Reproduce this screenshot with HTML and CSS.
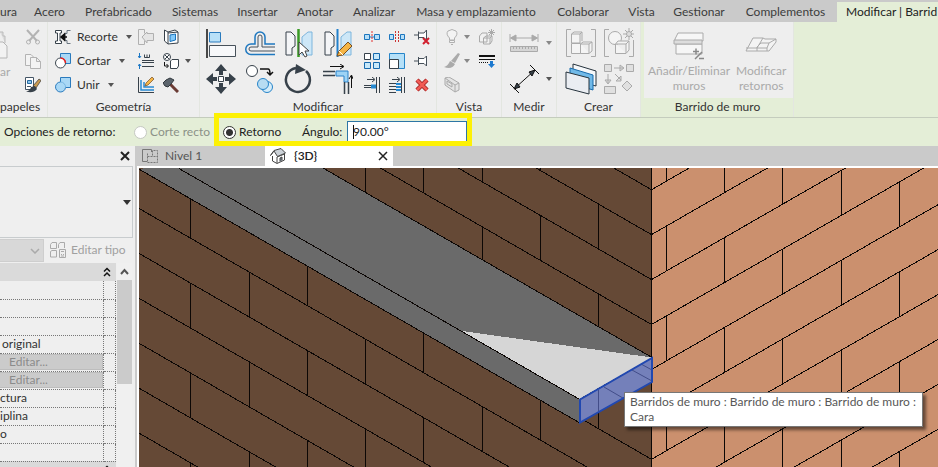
FILE: index.html
```html
<!DOCTYPE html>
<html lang="es">
<head>
<meta charset="utf-8">
<title>Barrido de muro</title>
<meta name="viewport" content="width=device-width, initial-scale=1">
<link rel="stylesheet" href="styles.css">
</head>
<body>
<div class="app">

<nav class="tabs" aria-label="Cinta">
  <a href="#" class="tab tab-first">ura</a>
  <a href="#" class="tab">Acero</a>
  <a href="#" class="tab">Prefabricado</a>
  <a href="#" class="tab">Sistemas</a>
  <a href="#" class="tab">Insertar</a>
  <a href="#" class="tab">Anotar</a>
  <a href="#" class="tab">Analizar</a>
  <a href="#" class="tab">Masa y emplazamiento</a>
  <a href="#" class="tab">Colaborar</a>
  <a href="#" class="tab">Vista</a>
  <a href="#" class="tab">Gestionar</a>
  <a href="#" class="tab">Complementos</a>
  <a href="#" class="tab tab-active">Modificar | Barrid</a>
</nav>

<div class="ribbon">
  <section class="panel panel-clip">
    <div class="tools">
      <button class="big-tool paste" disabled>
        <svg width="8" height="34"><path d="M0 4H3V8H5V15" fill="#ddd" stroke="#bbb"/><path d="M0 14H3L7 18V30H0" fill="#f2f2f2" stroke="#b5b5b5"/></svg>
        <span>ar</span>
      </button>
      <div class="stack">
        <button class="tool" aria-label="Cortar al portapapeles" disabled><svg width="16" height="16" fill="none" stroke="#b3b3b3"><path d="M2 1L12 12M14 1L4 12" stroke-width="2"/><circle cx="3.5" cy="13" r="2"/><circle cx="12.5" cy="13" r="2"/></svg></button>
        <button class="tool" aria-label="Copiar" disabled><svg width="16" height="16" fill="#f3f3f3" stroke="#b3b3b3"><path d="M.5 1.5H6L9 4.5V12.5H.5Z"/><path d="M5.500 4.500H11.500L15.500 8.500V15.500H5.500ZM11.500 4.500V8.500H15.500"/></svg></button>
        <button class="tool" aria-label="Igualar propiedades"><svg width="16" height="16"><path d="M.5.5H8.500V12.500H.5Z" fill="#fff" stroke="#456"/><path d="M2.500 3.500H6.500V6.500H2.500Z" fill="#8cc6ef" stroke="#2469a0"/><path d="M2 9.500H6" stroke="#456"/><path d="M8 9L14 2L16 3.500L11 11Z" fill="#c99a50" stroke="#333" stroke-width=".7"/><path d="M1 14.500Q5 14 6 10L10 9L12 12Q8 17 1 14.500" fill="#37414a"/></svg></button>
      </div>
    </div>
    <h2>papeles</h2>
  </section>

  <section class="panel panel-geometry">
    <div class="tools">
      <div class="stack labelled">
        <button class="tool"><svg width="16" height="16"><path d="M.5 1.500H6.500V4H5V12H6.500V14.500H.5V12H2.500V4H.5Z" fill="#fff" stroke="#37414a"/><path d="M15.500 1.500H12V4.500H10V11.500H12V14.500H15.500" fill="none" stroke="#687580"/><path d="M12 8H7M9.500 5L6 8L9.500 11Z" stroke="#111" stroke-width="1.500"/></svg><span>Recorte</span><i class="caret"></i></button>
        <button class="tool"><svg width="16" height="16"><path d="M5.500.5H15.500V10.500H5.500Z" fill="#a9d8f6" stroke="#2a7abd"/><circle cx="5.500" cy="10" r="5" fill="#fff" stroke="#3d4750"/><path d="M5.500 5A5 5 0 0 1 10.500 10" fill="none" stroke="#e22" stroke-width="1.500"/></svg><span>Cortar</span><i class="caret"></i></button>
        <button class="tool"><svg width="16" height="16"><path d="M5.500.5H15.500V10.500H10.500A5 5 0 1 1 5.500 5Z" fill="#a9d8f6" stroke="#2a7abd"/><path d="M5.500 5A5 5 0 0 1 10.500 10.500" fill="none" stroke="#77b6e2"/></svg><span>Unir</span><i class="caret"></i></button>
      </div>
      <div class="stack">
        <button class="tool" aria-label="Desajustar" disabled><svg width="16" height="16" fill="none" stroke="#b0b0b0"><path d="M6.500 4.500V.5H.5V15.500H6.500V11.500"/><path d="M15.500 4.500V11.500H9V14L4 8L9 3V4.500Z" fill="#e5e5e5"/></svg></button>
        <button class="tool" aria-label="Uniones de viga"><svg width="16" height="16" fill="none" stroke="#37414a"><path d="M4 7.500H16M4 9.500H16M4 13.500H16"/><path d="M6.500 1.500V4.500H11.500V1.500M9 1.500V4"/><path d="M1.500 0V5M0 3L1.500 5L3 3M1.500 16V11M0 13L1.500 11L3 13" stroke="#1976c5"/></svg></button>
        <button class="tool" aria-label="Uniones de muro"><svg width="16" height="16" fill="none"><path d="M.5 0V15.500H16" stroke="#37414a"/><path d="M3 3V13H16M6 5V10H16" stroke="#278bd5" stroke-width="1.500"/><path d="M7 9L8 6L14 0L16 2L10 8Z" fill="#f5b545" stroke="#704c25" stroke-width=".7"/></svg></button>
      </div>
      <div class="stack">
        <button class="tool" aria-label="Dividir cara"><svg width="16" height="16"><path d="M1.500 1L5 3L12 1L15 3V14L5 15L1.500 12Z" fill="#fff" stroke="#37414a"/><path d="M5 3V15M5 4L15 3" stroke="#37414a" fill="none"/><path d="M7 6L12.500 5V11L7 12.500Z" fill="#82c9fa" stroke="#1872bb"/></svg></button>
        <button class="tool" aria-label="Pintar"><svg width="16" height="16" fill="#fff" stroke="#37414a"><circle cx="4" cy="4" r="3.500"/><path d="M2 2L6 6M6 2L2 6"/><path d="M7.500 8L9 6.500H15.500V13L14 15.500H7.500Z"/><path d="M1.500 9V13H5M3.500 11L5.500 13L3.500 15" fill="none" stroke="#111"/></svg><i class="caret"></i></button>
        <button class="tool" aria-label="Derribar"><svg width="16" height="16"><path d="M6 6L15 15" stroke="#6a3b34" stroke-width="3"/><path d="M0 6L3 3L7 1L11 3L8 7L5 10L2 9Z" fill="#5b646c" stroke="#30373d"/></svg></button>
      </div>
    </div>
    <h2>Geometría</h2>
  </section>

  <section class="panel panel-modify">
    <div class="tools">
      <div class="big-grid">
        <button class="tool" aria-label="Alinear"><svg width="30" height="30"><path d="M1 1V30" stroke="#111" stroke-width="1.500"/><path d="M3.500 4.500H14.500V14H3.500Z" fill="#b8e0f8" stroke="#2a7abd"/><path d="M3.500 17.500H29.500V28.500H3.500Z" fill="#f7f8fa" stroke="#47515a"/></svg></button>
        <button class="tool" aria-label="Desfase"><svg width="30" height="30" fill="none"><path d="M30 26.500H6A5 5 0 0 1 6 16H10V9A5 5 0 0 1 20 9V16H30" stroke="#1e78c0" stroke-width="1.500"/><path d="M30 23H6A2 2 0 0 1 6 19H13V9A2 2 0 0 1 17 9V19H30" stroke="#47515a"/></svg></button>
        <button class="tool" aria-label="Simetría: elegir eje"><svg width="30" height="30"><path d="M2 4H7L11 8V18L8 20V27H2Z" fill="#f4f5f7" stroke="#37414a"/><path d="M28 4H24L18 9V27H28Z" fill="#cde7f7" stroke="#7db5dc"/><path d="M14.500 1V29" stroke="#399a24" stroke-width="2.500"/><path d="M15 14V27L18 24L21 29L23 28L21 23H25Z" fill="#fff" stroke="#444"/></svg></button>
        <button class="tool" aria-label="Simetría: dibujar eje"><svg width="30" height="30"><path d="M2 4H7L11 8V18L8 20V27H2Z" fill="#f4f5f7" stroke="#37414a"/><path d="M28 4H24L18 9V27H28Z" fill="#cde7f7" stroke="#7db5dc"/><path d="M14.500 1V29" stroke="#2381cc" stroke-width="2"/><path d="M14 28L16 23L25 14L29 18L20 27Z" fill="#f5b545" stroke="#774f24"/><path d="M16 23L20 27" stroke="#fff"/></svg></button>
        <button class="tool" aria-label="Mover"><svg width="30" height="30" fill="#37414a"><path d="M15 0L21 7H17V11H13V7H9ZM15 30L9 23H13V19H17V23H21ZM0 15L7 9V13H11V17H7V21ZM30 15L23 21V17H19V13H23V9Z"/><path d="M12.500 12.500H17.500V17.500H12.500Z" fill="#fff" stroke="#37414a"/></svg></button>
        <button class="tool" aria-label="Copiar elementos"><svg width="30" height="30"><circle cx="7" cy="7" r="5.500" fill="#fff" stroke="#37414a"/><circle cx="22" cy="23" r="5.500" fill="#d5ecf9" stroke="#2684c9"/><circle cx="18" cy="20" r="5.500" fill="#b7dcf2" stroke="#2684c9"/><path d="M15 5H23Q25 5 25 10M22 8L25 11L28 8" fill="none" stroke="#111" stroke-width="1.500"/></svg></button>
        <button class="tool" aria-label="Girar"><svg width="30" height="30"><path d="M22 7A12 12 0 1 1 12 4" fill="none" stroke="#37414a" stroke-width="2.500"/><path d="M12 0L22 6L11 10Z" fill="#37414a"/></svg></button>
        <button class="tool" aria-label="Recortar esquina"><svg width="30" height="30" fill="none"><path d="M13 7H25V18H21V12H13Z" fill="#9dd3f5" stroke="#2a82c9"/><path d="M0 7.500H12M0 11.500H12M21.500 18V30M25.500 18V30" stroke="#37414a" stroke-width="1.500"/><path d="M7 2.500H20M17 0L21 2.500L17 5M28.500 24V12M26 15L28.500 11L30 15" stroke="#111"/></svg></button>
      </div>
      <div class="small-grid">
        <button class="tool" aria-label="Dividir elemento"><svg width="16" height="16"><path d="M.5 5.500H5.500V10.500H.5ZM10.500 5.500H15.500V10.500H10.500Z" fill="#b8dff7" stroke="#1d76be"/><path d="M5 8H11" stroke="#1d76be"/><path d="M8 2V14" stroke="#e23030" stroke-dasharray="2 1"/></svg></button>
        <button class="tool" aria-label="Dividir con hueco"><svg width="16" height="16"><path d="M.5 5.500H4.500V10.500H.5ZM11.500 5.500H15.500V10.500H11.500Z" fill="#b8dff7" stroke="#1d76be"/><path d="M6.500 2V14M9.500 2V14" stroke="#c33" stroke-dasharray="2 1"/></svg></button>
        <button class="tool" aria-label="Desbloquear"><svg width="16" height="16"><path d="M0 6H4M4.500 2.500V10.500M4.500 4H10L12.500 1V11L10 8.500H4.500" fill="#fff" stroke="#47515a"/><path d="M9 9L15 15M15 9L9 15" stroke="#d11f2d" stroke-width="2"/></svg></button>
        <button class="tool" aria-label="Matriz"><svg width="16" height="16" fill="#c7e8fa" stroke="#1769ad"><path d="M.5.5H6.500V6.500H.5Z" fill="#fff" stroke="#37414a"/><path d="M9.500.5H15.500V6.500H9.500ZM.5 9.500H6.500V15.500H.5ZM9.500 9.500H15.500V15.500H9.500Z"/></svg></button>
        <button class="tool" aria-label="Escala"><svg width="16" height="16"><path d="M.5.5H15.500V15.500H.5Z" fill="#b5e0f8" stroke="#2685c9"/><path d="M.5 6.500H9.500V15.500H.5Z" fill="#fff" stroke="#37414a"/></svg></button>
        <button class="tool" aria-label="Bloquear"><svg width="16" height="16"><path d="M0 8H4M4.500 4V12M4.500 5.500H10L12.500 3V13L10 10.500H4.500" fill="#fff" stroke="#47515a"/></svg></button>
        <button class="tool" aria-label="Recortar un elemento"><svg width="16" height="16" fill="none" stroke="#37414a"><path d="M3 2.500H10M8 0L11 2.500L8 5M0 8.500H7M0 10.500H7M12.500 0V16M15.500 0V16"/><path d="M7 8.500H12M7 10.500H12" stroke="#2588d0" stroke-width="2"/></svg></button>
        <button class="tool" aria-label="Recortar varios elementos"><svg width="16" height="16" fill="none" stroke="#37414a"><path d="M3 2.500H10M8 0L11 2.500L8 5M0 6.500H7M0 9.500H7M0 12.500H7M0 15.500H7M12.500 0V16M15.500 0V16"/><path d="M7 7H12M7 10H12M7 13H12" stroke="#2588d0" stroke-width="2"/></svg></button>
        <button class="tool" aria-label="Suprimir"><svg width="16" height="16"><path d="M3 3L13 13M13 3L3 13" stroke="#a72929" stroke-width="4.500"/><path d="M3 3L13 13M13 3L3 13" stroke="#f25b55" stroke-width="2.500"/></svg></button>
      </div>
    </div>
    <h2>Modificar</h2>
  </section>

  <section class="panel panel-view">
    <div class="tools">
      <div class="stack">
        <button class="tool" aria-label="Ocultar en vista" disabled><svg width="16" height="16" fill="#f3f3f3" stroke="#b0b0b0"><path d="M5.500 11V9Q1.500 5 4 2Q8-1 12 2Q14.500 5 10.500 9V11Z"/><path d="M5.500 11.500H10.500V13.500H5.500ZM7 15.500H9"/></svg><i class="caret"></i></button>
        <button class="tool" aria-label="Modificar gráficos" disabled><svg width="16" height="16" fill="#aaa"><path d="M7 8L14 0L16 1L11 10ZM0 14Q4 13 6 8L11 11Q8 17 0 14"/></svg><i class="caret"></i></button>
        <button class="tool" aria-label="Cuadro de selección" disabled><svg width="16" height="16" fill="#e4e4e4" stroke="#aaa"><path d="M1 1L5 0L15 6V13L11 15L1 8ZM1 1L11 8V15M11 8L15 6M3 4L8 7V10L3 7Z"/></svg></button>
      </div>
      <div class="stack">
        <button class="tool" aria-label="Desplazar elementos" disabled><svg width="16" height="16" fill="#f1f1f1" stroke="#aaa"><path d="M.5 7L3 4H8V13H.5ZM4.500 9L7 7H13L11 9V15H4.500ZM11 9H4.500M13 7V12L11 15"/><path d="M12.500 0V7M9 3.500H16M10 1L15 6M15 1L10 6"/></svg></button>
        <button class="tool" aria-label="Estilo de línea"><svg width="16" height="16"><path d="M0 3H16" stroke="#111" stroke-width="2"/><path d="M0 6.500H16" stroke="#111"/><path d="M0 9.500H10" stroke="#111" stroke-dasharray="1 1"/><path d="M11 8H14V11H16L12.500 15L9 11H11Z" fill="#1c79cf"/></svg></button>
      </div>
    </div>
    <h2>Vista</h2>
  </section>

  <section class="panel panel-measure">
    <div class="tools">
      <div class="big-stack">
        <button class="tool" aria-label="Medir" disabled><svg width="30" height="30" fill="none" stroke="#aaa"><path d="M3 10H27M1 6V14M29 6V14"/><path d="M1.500 10L7 7V13ZM28.500 10L23 7V13Z" fill="#aaa"/><path d="M1.500 18.500H28.500V23.500H1.500Z" fill="#d5d5d5"/><path d="M4.500 19V21M7.500 19V21M10.500 19V21M13.500 19V21M16.500 19V21M19.500 19V21M22.500 19V21M25.500 19V21"/></svg><i class="caret"></i></button>
        <button class="tool" aria-label="Cota alineada"><svg width="30" height="30" stroke="#111"><path d="M5 25L26 6M1 20L10 29M21 1L30 10"/><path d="M5 25L8 19L11 23ZM26 6L20 8L23 12Z" fill="#37414a"/></svg><i class="caret"></i></button>
      </div>
    </div>
    <h2>Medir</h2>
  </section>

  <section class="panel panel-create">
    <div class="tools">
      <div class="big-grid">
        <button class="tool" aria-label="Crear grupo" disabled><svg width="30" height="30" fill="#f4f4f4" stroke="#aaa"><path d="M5 1.500H.5V28.500H5M25 1.500H29.500V28.500H25" fill="none"/><path d="M5.500 6L8 4H16L14 6V15H5.500ZM14 6H5.500M16 4V13M5.500 15.500H14.500V25.500H5.500ZM14.500 16L17 14H26V23L23 25.500H14.500ZM23 25V16H15M23 16L26 14"/></svg></button>
        <button class="tool" aria-label="Crear similar" disabled><svg width="30" height="30" fill="#f4f4f4" stroke="#aaa"><path d="M5 1.500H.5V28.500H5M25 28.500H29.500V12" fill="none"/><circle cx="11" cy="10" r="6.500"/><path d="M11.500 16L14 13H25V22L22 25.500H11.500ZM22 25V16H12M22 16L25 13"/><path d="M25 0V12M19 6H30M21 2L29 10M29 2L21 10"/><circle cx="25" cy="6" r="2.500" fill="#ddd"/></svg></button>
        <button class="tool" aria-label="Crear ensamblaje"><svg width="32" height="32" stroke="#26333d"><path d="M8 1L31 8V23L8 17Z" fill="#f6f8fa"/><path d="M5 5L28 12V27L5 20Z" fill="#70b9e8" stroke="#176aac"/><path d="M1 9L24 15V31L1 25Z" fill="#eaedf2"/></svg></button>
        <button class="tool" aria-label="Crear piezas" disabled><svg width="30" height="30" fill="#e0e0e0" stroke="#aaa"><path d="M.5.5H7.500V7.500H.5ZM22.500.5H29.500V7.500H22.500ZM.5 22.500H11.500V29.500H.5ZM23 17L28 22L23 27L18 22Z"/><path d="M10 4H19M16 1L20 4L16 7ZM4 10V19M1 16L4 20L7 16ZM11 10L17 16M17 12V17H12Z"/></svg></button>
      </div>
    </div>
    <h2>Crear</h2>
  </section>

  <section class="panel panel-sweep">
    <div class="tools">
      <button class="big-tool" disabled>
        <svg width="32" height="32" fill="#f6f6f6" stroke="#aaa"><path d="M2 10L5 4H30V12H2ZM3 15H29V25H3Z"/><path d="M1 11H29V15H1Z" fill="#ddd"/><path d="M20 22.500H26M23 19.500V25.500M22 30L29 23M26 29.500H31" stroke="#888" stroke-width="1.500"/></svg>
        <span>Añadir/Eliminar<br>muros</span>
      </button>
      <button class="big-tool" disabled>
        <svg width="32" height="32" fill="#f3f3f3" stroke="#aaa"><path d="M1 22L8 9H18L20 10H31V13L24 22Z"/><path d="M1 19H12L18 9M12 18V22M12 18L16 14H24L31 10M24 14L22 19H12M22 19V22" fill="none"/></svg>
        <span>Modificar<br>retornos</span>
      </button>
    </div>
    <h2>Barrido de muro</h2>
  </section>
</div>

<form class="options">
  <span class="options-title">Opciones de retorno:</span>
  <label class="radio radio-off"><input type="radio" name="retorno" disabled>Corte recto</label>
  <label class="radio"><input type="radio" name="retorno" checked>Retorno</label>
  <label class="angle-label" for="angulo">Ángulo:</label>
  <div class="angle"><input id="angulo" type="text" value="90.00°"><i class="text-cursor"></i></div>
  <div class="highlight"></div>
</form>

<main class="workspace">
  <aside class="properties">
    <div class="palette-title"><button class="close" aria-label="Cerrar propiedades"><svg width="10" height="10"><path d="M1 1L9 9M9 1L1 9" stroke="#222" stroke-width="2"/></svg></button></div>
    <button class="type-selector" aria-label="Selector de tipo"><i class="caret caret-large"></i></button>
    <div class="type-row">
      <select aria-label="Categoría" disabled><option></option></select>
      <svg class="select-arrow" width="10" height="6"><path d="M1 1L5 5L9 1" fill="none" stroke="#aaa" stroke-width="1.500"/></svg>
      <button class="edit-type" disabled><svg width="16" height="16" fill="none" stroke="#aaa"><path d="M.5 2.500L2 .5H6.500V6.500H.5ZM8.500 2.500L10 .5H14.500V6M.5 9.500L2 8.500H6.500V15H.5ZM8.500 2.500V6"/><path d="M9.500 7.500H15.500V15.500H9.500ZM11 9.500H14M11 12.500H12M13 12.500H14M11 14H14" fill="#eee"/></svg>Editar tipo</button>
    </div>
    <div class="property-area">
      <table class="property-table">
        <colgroup><col><col class="link-column"></colgroup>
        <thead><tr><th colspan="2"><svg width="8" height="10" fill="none" stroke="#111" stroke-width="1.500"><path d="M1 4.500L4 1.500L7 4.500M1 9L4 6L7 9"/></svg></th></tr></thead>
        <tbody>
          <tr><td></td><td></td></tr>
          <tr><td></td><td></td></tr>
          <tr><td></td><td></td></tr>
          <tr><td>original</td><td></td></tr>
          <tr><td class="edit-cell"><button disabled>Editar...</button></td><td></td></tr>
          <tr><td class="edit-cell"><button disabled>Editar...</button></td><td></td></tr>
          <tr><td class="cut">ctura</td><td></td></tr>
          <tr><td class="cut">iplina</td><td></td></tr>
          <tr><td class="cut">o</td><td></td></tr>
          <tr><td></td><td></td></tr>
        </tbody>
        <tfoot><tr><th colspan="2"><svg width="8" height="10" fill="none" stroke="#111" stroke-width="1.500"><path d="M1 4.500L4 1.500L7 4.500M1 9L4 6L7 9"/></svg></th></tr></tfoot>
      </table>
      <div class="scrollbar">
        <svg width="15" height="17"><path d="M4 11L7.500 7L11 11" fill="none" stroke="#555" stroke-width="2"/></svg>
        <div class="thumb"></div>
      </div>
    </div>
  </aside>

  <section class="documents">
    <div class="doc-tabs">
      <button class="doc-tab"><svg width="16" height="14" fill="none" stroke="#777"><path d="M5 12.500H.5V.5H9.500V3"/><path d="M5.500 4.500V13.500H15.500V1.500H10.500V7M5.500 7.500H15" stroke-dasharray="2 1"/></svg><span>Nivel 1</span></button>
      <button class="doc-tab doc-active"><svg width="16" height="16" fill="#fff" stroke="#444"><path d="M2.500 8V13L7 15.500L14.500 12V6L7 9V15"/><path d="M.5 7.500L4 2.500L11 .5L15.500 5L7.500 8.500L4 3Z" fill="#ccd2d8"/><path d="M10 13.500V10L12 9V12.500" fill="#7b8792"/></svg><span>{3D}</span><svg class="doc-close" width="10" height="10"><path d="M1 1L9 9M9 1L1 9" stroke="#222" stroke-width="1.500"/></svg></button>
    </div>
    <div class="viewport">
      <svg class="model" role="img" aria-label="Vista 3D de un barrido de muro">
        <defs>
          <path id="left-course" d="M-348.500-387.400L651.500 189.700"/>
          <path id="right-course" d="M651.500 189.700L2651.500-960.300"/>
        </defs>
        <g transform="translate(-139 -168)" fill="none" stroke="#0c0705" shape-rendering="crispEdges">
          <path d="M0 0H652V2000H0Z" fill="#654936" stroke="none"/>
          <path d="M652 0H4000V2000H652Z" fill="#cb906e" stroke="none"/>
          <g>
            <use href="#left-course" y="-44.930"/><use href="#left-course"/><use href="#left-course" y="44.930"/><use href="#left-course" y="89.860"/><use href="#left-course" y="134.790"/><use href="#left-course" y="179.720"/><use href="#left-course" y="224.650"/><use href="#left-course" y="269.580"/><use href="#left-course" y="314.510"/><use href="#left-course" y="359.440"/><use href="#left-course" y="404.370"/><use href="#left-course" y="449.300"/><use href="#left-course" y="494.230"/><use href="#left-course" y="539.160"/>
          </g>
          <g>
            <use href="#right-course"/><use href="#right-course" y="44.930"/><use href="#right-course" y="89.860"/><use href="#right-course" y="134.790"/><use href="#right-course" y="179.720"/><use href="#right-course" y="224.650"/><use href="#right-course" y="269.580"/><use href="#right-course" y="314.510"/><use href="#right-course" y="359.440"/><use href="#right-course" y="404.370"/><use href="#right-course" y="449.300"/>
          </g>
          <g stroke-dasharray="44.930">
            <path d="M190.500-76.300V1000M249.500-87.200V1000M307.500-8.800V1000M365.500-20.200V1000M423.500 58.100V1000M482.500 47.300V1000M540.500 125.700V1000M598.500 114.200V1000"/>
            <path d="M666.500 136.200V1000M724.500 147.700V1000M782.500 69.500V1000M841.500 80.400V1000M899.500 2.200V1000"/>
          </g>
          <path d="M651.500 0V2000"/>
          <path d="M139 169L300 150L323 168L652 357L579 422.500Z" fill="#6a6a6a" stroke="none"/>
          <path d="M462 331L652 357.500L579 399Z" fill="#d6d6d6" stroke="none"/>
          <path d="M137 168L579 422.500M179 168.500L579 399M323 168L652 357.500"/>
        </g>
        <g transform="translate(-139 -168)" fill="none">
          <path d="M580 399.500L652 358V382L580 422.500Z" fill="#7480ba"/>
          <path d="M598.500 390V411M604 387L628 401M632 370L652 381M641 364L652 370" stroke="#424d89"/>
          <path d="M580 399.500L652 358V382L580 422.500Z" stroke="#2148b0" stroke-width="2"/>
        </g>
      </svg>
      <div class="tooltip" role="tooltip">Barridos de muro : Barrido de muro : Barrido de muro :<br>Cara</div>
    </div>
  </section>
</main>
</div>
</body>
</html>
```
FILE: styles.css
```css
* { box-sizing: border-box; }

body {
  margin: 0;
  overflow: hidden;
  font: 12px/16px Lato, "Open Sans", sans-serif;
  color: #333;
}

button, input, select { font: inherit; color: inherit; }
button { margin: 0; padding: 0; border: 0; background: none; }
svg { display: block; flex: none; }

.app {
  display: flex;
  flex-direction: column;
  height: 100vh;
  background: #eee;
}

/* Ribbon tabs */
.tabs {
  display: grid;
  grid-template-columns: 24px 51px 87px 66px 59px 56px 62px 142px 72px 45px 70px 103px 1fr;
  height: 22px;
  flex: none;
  padding-top: 2px;
  background: #cacaca;
}
.tab {
  overflow: hidden;
  text-align: center;
  line-height: 20px;
  white-space: nowrap;
  text-decoration: none;
  color: #3c3c3c;
}
.tab-first { text-align: left; }
.tab-active { padding-left: 9px; text-align: left; background: #e4eed7; color: #222; }

/* Ribbon panels */
.ribbon {
  display: flex;
  flex: none;
  height: 96px;
  border-bottom: 1px solid #c4ccbd;
  background: #e4eed7;
}
.panel {
  display: flex;
  flex-direction: column;
  flex: none;
  border-right: 1px solid #e3e6e0;
  background: #eee;
}
.panel h2 {
  margin: 0;
  font-size: 12px;
  line-height: 18px;
  font-weight: 400;
  text-align: center;
}
.tools { display: flex; height: 76px; padding-top: 3px; }
.stack { display: grid; grid-template-rows: repeat(3, 24px); }
.tool { display: flex; align-items: center; }
.caret {
  flex: none;
  border: 3px solid transparent;
  border-top: 4px solid #555;
  border-bottom: 0;
}
.caret-large { border-width: 5px 4px 0; border-top-color: #333; }

.big-grid { display: grid; grid-template-rows: 36px 36px; }
.big-grid .tool, .small-grid .tool { justify-content: center; }
.small-grid { display: grid; grid-template: repeat(3, 24px) / repeat(3, 25px); }
.big-stack { display: grid; grid-template-rows: 36px 36px; }
.big-tool {
  display: flex;
  flex-direction: column;
  align-items: center;
  line-height: 15px;
  color: #aaa;
}

.panel-clip { width: 48px; }
.panel-clip h2 { text-align: left; }
.panel-clip .tools { gap: 17px; }
.paste { width: 8px; padding-top: 3px; align-items: flex-start; gap: 2px; }

.panel-geometry { width: 152px; }
.panel-geometry .tools { padding-left: 7px; }
.panel-geometry .stack { width: 25px; }
.panel-geometry .labelled { width: 83px; }
.panel-geometry .tool { gap: 6px; }
.panel-geometry .labelled .caret { margin-left: 2px; }

.panel-modify { width: 237px; }
.panel-modify .tools { padding-left: 1px; gap: 2px; }
.panel-modify .big-grid { grid-template-columns: repeat(4, 39px); }

.panel-view { width: 65px; }
.panel-view .tools { padding-left: 7px; gap: 9px; }
.panel-view .tool { gap: 4px; }

.panel-measure { width: 55px; }
.panel-measure .tools { padding-left: 7px; }
.panel-measure .tool { gap: 7px; }

.panel-create { width: 84px; }
.panel-create .tools { padding-left: 5px; }
.panel-create .big-grid { grid-template-columns: 38px 38px; }

.panel-sweep { width: 152px; margin-left: 1px; background: #e4eed7; }
.panel-sweep .tools { margin-left: 2px; padding: 7px 0 0 4px; gap: 6px; background: #eee; }
.panel-sweep .big-tool { gap: 2px; }

.panel :disabled .caret { border-top-color: #888; }

/* Options bar */
.options {
  position: relative;
  z-index: 1;
  display: flex;
  align-items: center;
  flex: none;
  height: 28px;
  padding-left: 4px;
  background: #e4eed7;
  color: #222;
}
.options-title { width: 130px; white-space: nowrap; }
.radio { display: flex; align-items: center; gap: 3px; width: 89px; white-space: nowrap; }
.radio + .radio { width: 79px; }
.radio-off { color: #8b9187; }
.radio input {
  appearance: none;
  flex: none;
  width: 13px;
  height: 13px;
  margin: 0;
  border: 1px solid #333;
  border-radius: 50%;
  background: #fff;
}
.radio input:checked { background: radial-gradient(circle, #333 3px, #fff 4px); }
.radio input:disabled { border-color: #c5c8c2; }
.angle-label { width: 45px; }
.angle { position: relative; width: 120px; }
.angle input {
  display: block;
  width: 100%;
  height: 22px;
  padding: 0 5px 2px;
  border: 1px solid #2d76a5;
  background: #fff;
}
.text-cursor { position: absolute; left: 6px; top: 4px; width: 1px; height: 14px; background: #111; }
.highlight {
  position: absolute;
  left: 214px;
  top: -5px;
  width: 258px;
  height: 33px;
  border: 5px solid #fdf104;
  pointer-events: none;
}

/* Workspace */
.workspace { display: flex; flex: 1; min-height: 0; }

.properties {
  display: flex;
  flex-direction: column;
  flex: none;
  width: 137px;
  padding-right: 2px;
  border-right: 2px solid #cacaca;
  background: #efefef;
}
.palette-title { display: flex; justify-content: flex-end; flex: none; height: 20px; padding: 5px 3px; }
.type-selector {
  display: flex;
  justify-content: flex-end;
  align-items: center;
  flex: none;
  height: 72px;
  padding-right: 1px;
  border: 1px solid #c8ccce;
  border-left: 0;
}
.type-row { position: relative; display: flex; flex: none; height: 25px; padding-top: 1px; gap: 6px; }
.type-row select {
  appearance: none;
  width: 44px;
  height: 23px;
  border: 1px solid #c1c1c1;
  border-left: 0;
  background: #cfcfcf;
}
.select-arrow { position: absolute; left: 30px; top: 10px; }
.edit-type { display: flex; align-items: center; height: 22px; gap: 5px; white-space: nowrap; color: #a0a0a0; }

.property-area { display: flex; flex: 1; min-height: 0; overflow: hidden; }
.property-table { flex: none; width: 116px; table-layout: fixed; border-collapse: collapse; align-self: flex-start; }
.link-column { width: 12px; }
.property-table th { height: 18px; padding: 0 5px 0 0; background: #dadada; }
.property-table th svg { margin-left: auto; }
.property-table td {
  height: 18px;
  padding: 0 0 0 2px;
  border-right: 1px dotted #777;
  border-bottom: 1px dotted #777;
  line-height: 16px;
}
.property-table .cut { padding-left: 0; }
.property-table .edit-cell { padding: 0; }
.edit-cell button {
  display: block;
  width: 100%;
  height: 16px;
  padding-left: 9px;
  border: 1px solid #bdbdbd;
  border-left: 0;
  background: #cbcbcb;
  line-height: 14px;
  text-align: left;
  color: #8b8b8b;
}
.scrollbar { flex: none; width: 15px; margin-left: 1px; background: #f0f0f0; }
.thumb { height: 104px; background: #cbcbcb; }

.documents { display: flex; flex-direction: column; flex: 1; min-width: 0; }
.doc-tabs { display: flex; flex: none; height: 20px; background: #cacaca; }
.doc-tab { display: flex; align-items: center; width: 128px; padding: 0 5px; gap: 7px; color: #555; }
.doc-active { gap: 8px; background: #fff; color: #222; font-weight: 600; }
.doc-close { margin-left: auto; }
.viewport {
  position: relative;
  flex: 1;
  min-height: 0;
  overflow: hidden;
  border: 2px solid #fff;
  border-width: 2px 0 0 2px;
}
.model { width: 100%; height: 100%; }
.tooltip {
  position: absolute;
  left: 485px;
  top: 224px;
  padding: 1px 6px 2px 5px;
  border: 1px solid #777;
  background: #fff;
  box-shadow: 3px 3px 3px rgba(0, 0, 0, .5);
  line-height: 15px;
  white-space: nowrap;
  color: #575757;
}
```
